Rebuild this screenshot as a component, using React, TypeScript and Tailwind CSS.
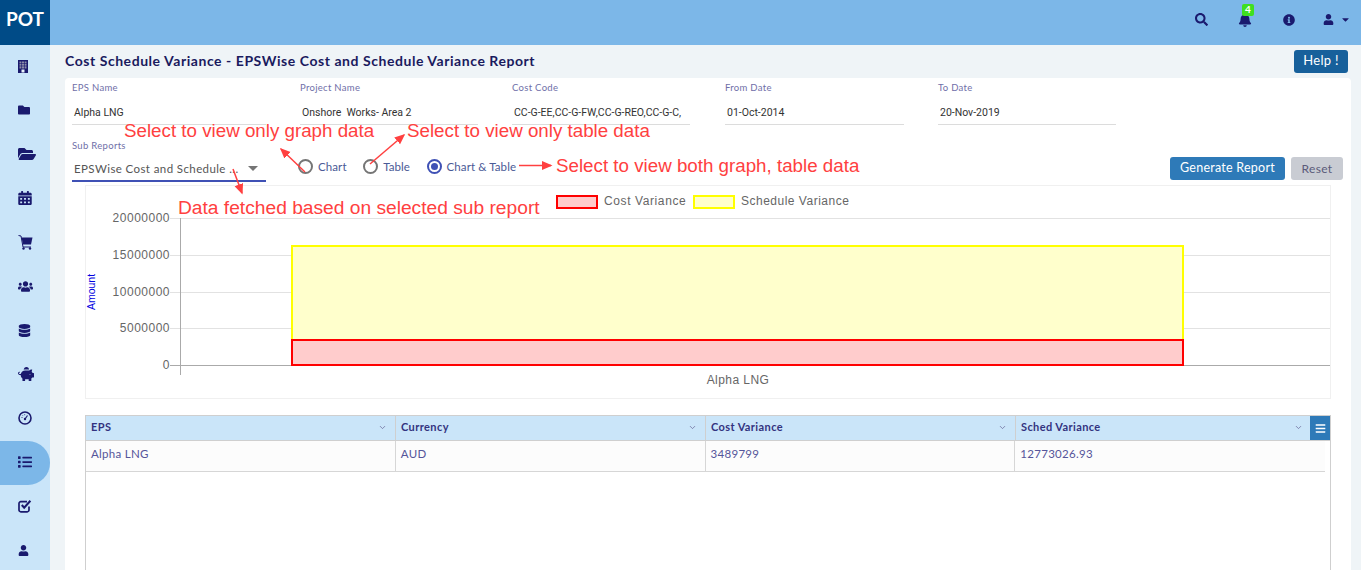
import { useState } from "react";
import {
  FaFolder,
  FaFolderOpen,
  FaCalendarAlt,
  FaUsers,
  FaDatabase,
  FaPiggyBank,
  FaList,
  FaUser,
  FaSearch,
  FaBell,
  FaInfoCircle,
  FaCaretDown,
  FaBars,
} from "react-icons/fa";
import { FiChevronDown } from "react-icons/fi";

function BuildingIcon() {
  return (
    <svg width="10" height="13" viewBox="0 0 10 13">
      <rect width="10" height="13" fill="#1a1a6e" />
      <path d="M1.5 1.5h7v7h-7z" fill="#8b8ba8" />
      <path d="M3.5 1v8M6.5 1v8M1 3.5h8M1 6h8" stroke="#1a1a6e" strokeWidth="0.6" />
      <rect x="3.5" y="9.5" width="3" height="3" fill="#e8f2fb" />
    </svg>
  );
}

function CartIcon() {
  return (
    <svg width="15" height="15" viewBox="0 0 15 15">
      <path d="M0.5 0.5 L3 1 L5 12 H13" fill="none" stroke="#1a1a6e" strokeWidth="1" />
      <path d="M3.5 2.5 H14.5 L13 9.5 H5 Z" fill="#1a1a6e" />
      <circle cx="5.5" cy="13.5" r="1.2" fill="#1a1a6e" />
      <circle cx="12" cy="13.5" r="1.2" fill="#1a1a6e" />
    </svg>
  );
}

function GaugeIcon() {
  return (
    <svg width="14" height="14" viewBox="0 0 14 14">
      <circle cx="7" cy="7" r="6" fill="none" stroke="#1a1a6e" strokeWidth="1.6" />
      <path d="M7 8 L9.5 4.5" stroke="#1a1a6e" strokeWidth="1.2" />
      <circle cx="7" cy="8" r="1.2" fill="#1a1a6e" />
      <path d="M3.5 6.5h1M6.7 3.2v1M4.4 4.2l.6.6" stroke="#1a1a6e" strokeWidth="0.8" />
    </svg>
  );
}

function CheckIcon() {
  return (
    <svg width="14" height="14" viewBox="0 0 14 14">
      <path
        d="M11 7.5 V11 A1.8 1.8 0 0 1 9.2 12.8 H2.8 A1.8 1.8 0 0 1 1 11 V4.5 A1.8 1.8 0 0 1 2.8 2.7 H9"
        fill="none"
        stroke="#1a1a6e"
        strokeWidth="1.7"
      />
      <path d="M3.8 6 L6.2 8.6 L12.4 1.8" fill="none" stroke="#1a1a6e" strokeWidth="2.1" />
    </svg>
  );
}

const navItems = [
  { icon: <BuildingIcon /> },
  { icon: <FaFolder size={12} /> },
  { icon: <FaFolderOpen size={18} /> },
  { icon: <FaCalendarAlt size={14} className="scale-x-110" /> },
  { icon: <CartIcon /> },
  { icon: <FaUsers size={15} /> },
  { icon: <FaDatabase size={13} /> },
  { icon: <FaPiggyBank size={16} /> },
  { icon: <GaugeIcon /> },
  { icon: <FaList size={14} />, active: true },
  { icon: <CheckIcon /> },
  { icon: <FaUser size={11} /> },
];

const filters = [
  { label: "EPS Name", value: "Alpha LNG", width: "w-[194px]", mr: "mr-[34px]" },
  { label: "Project Name", value: "Onshore  Works- Area 2", width: "w-[178px]", mr: "mr-[34px]" },
  { label: "Cost Code", value: "CC-G-EE,CC-G-FW,CC-G-REO,CC-G-C,", width: "w-[178px]", mr: "mr-[35px]" },
  { label: "From Date", value: "01-Oct-2014", width: "w-[179px]", mr: "mr-[34px]" },
  { label: "To Date", value: "20-Nov-2019", width: "w-[178px]", mr: "" },
];

const columns = ["EPS", "Currency", "Cost Variance", "Sched Variance"];
const row = ["Alpha LNG", "AUD", "3489799", "12773026.93"];

function Radio({ label, checked, onSelect }: { label: string; checked: boolean; onSelect: () => void }) {
  return (
    <button onClick={onSelect} className="flex items-center gap-[5px] text-[11.5px] tracking-[0.1px] text-[#4a5a96]">
      <span
        className={
          "flex h-[15px] w-[15px] items-center justify-center rounded-full border-2 " +
          (checked ? "border-[#3f51b5]" : "border-[#757575]")
        }
      >
        {checked && <span className="h-[7px] w-[7px] rounded-full bg-[#3f51b5]" />}
      </span>
      {label}
    </button>
  );
}

function Chart() {
  const ticks = [
    { y: 33, label: "20000000" },
    { y: 70, label: "15000000" },
    { y: 107, label: "10000000" },
    { y: 143, label: "5000000" },
    { y: 180, label: "0" },
  ];
  return (
    <svg width="1244" height="212" className="block">
      {ticks.map((t) => (
        <g key={t.label}>
          <line x1="84" x2="1244" y1={t.y - 1 + 0.5} y2={t.y - 1 + 0.5} stroke={t.y === 180 ? "#aaa" : "#e2e2e2"} />
          <text x="84" y={t.y + 3} textAnchor="end" fontSize="12" letterSpacing="0.5" fill="#666" fontFamily="Liberation Sans, sans-serif">
            {t.label}
          </text>
        </g>
      ))}
      <line x1="94.5" x2="94.5" y1="32" y2="189" stroke="#aaa" />
      <rect x="206" y="60" width="891" height="119" fill="#ffffcc" stroke="#ffff00" strokeWidth="2" />
      <rect x="206" y="154" width="891" height="25" fill="#ffcccc" stroke="#ff0000" strokeWidth="2" />
      <text x="652" y="198" textAnchor="middle" fontSize="12" letterSpacing="0.45" fill="#666" fontFamily="Liberation Sans, sans-serif">
        Alpha LNG
      </text>
      <text transform="translate(9 106) rotate(-90)" textAnchor="middle" fontSize="10.5" fill="#0000e0" fontFamily="Liberation Sans, sans-serif">
        Amount
      </text>
      <rect x="471" y="10" width="40" height="12" fill="#ffcccc" stroke="#ff0000" strokeWidth="2" />
      <text x="518" y="18.5" fontSize="12" letterSpacing="0.6" fill="#666" fontFamily="Liberation Sans, sans-serif">
        Cost Variance
      </text>
      <rect x="608" y="10" width="40" height="12" fill="#ffffcc" stroke="#ffff00" strokeWidth="2" />
      <text x="655" y="18.5" fontSize="12" letterSpacing="0.5" fill="#666" fontFamily="Liberation Sans, sans-serif">
        Schedule Variance
      </text>
    </svg>
  );
}

function Annotations() {
  const red = "#ff4040";
  return (
    <div className="pointer-events-none absolute inset-0 font-['Liberation_Sans',sans-serif] text-[18.75px] leading-[22px] text-[#ff4040]">
      <svg width="1361" height="570" className="absolute left-0 top-0">
        <defs>
          <marker id="head" markerWidth="8" markerHeight="8" refX="6" refY="3" orient="auto">
            <path d="M0 0 L7 3 L0 6 Z" fill={red} />
          </marker>
        </defs>
        <line x1="305" y1="172" x2="281" y2="149" stroke={red} strokeWidth="1.5" markerEnd="url(#head)" />
        <line x1="370" y1="164" x2="404" y2="135" stroke={red} strokeWidth="1.5" markerEnd="url(#head)" />
        <line x1="519" y1="165.5" x2="551" y2="165.5" stroke={red} strokeWidth="1.5" markerEnd="url(#head)" />
        <line x1="233" y1="169" x2="242" y2="193" stroke={red} strokeWidth="1.5" markerEnd="url(#head)" />
      </svg>
      <span className="absolute left-[124px] top-[120px]">Select to view only graph data</span>
      <span className="absolute left-[407px] top-[120px]">Select to view only table data</span>
      <span className="absolute left-[556px] top-[155px]">Select to view both graph, table data</span>
      <span className="absolute left-[178px] top-[197px] text-[19.2px]">Data fetched based on selected sub report</span>
    </div>
  );
}

export default function App() {
  const [mode, setMode] = useState("both");

  return (
    <div className="relative flex h-[570px] w-[1361px] flex-col overflow-hidden bg-[#eff4f7] font-['Lato',sans-serif]">
      {/* Top bar */}
      <header className="flex h-[45px] shrink-0 items-center bg-[#7cb7e8] text-[#1a1a6e]">
        <div className="flex h-full w-[50px] items-center justify-center bg-[#004b87] pb-[6px] text-[19px] font-bold text-white">POT</div>
        <div className="ml-auto flex items-center pb-[6px]">
          <FaSearch size={13} className="mr-[30px]" />
          <div className="relative mr-[31px]">
            <FaBell size={14} />
            <span className="absolute left-[4px] top-[-9px] flex h-[12px] w-[12px] items-center justify-center rounded-[2px] bg-[#3fe01f] text-[10px] font-bold text-white">
              4
            </span>
          </div>
          <FaInfoCircle size={12} className="mr-[28px]" />
          <FaUser size={11} />
          <FaCaretDown size={11} className="ml-[6px] mr-[10px]" />
        </div>
      </header>

      <div className="flex min-h-0 flex-1">
        {/* Sidebar */}
        <nav className="flex w-[50px] shrink-0 flex-col bg-[#cae5f9] text-[#1a1a6e]">
          {navItems.map((item, i) => (
            <div
              key={i}
              className={
                "flex h-[44px] shrink-0 items-center pb-[2px] pl-[18px] " +
                (item.active ? "rounded-r-[22px] bg-[#7cb7e8]" : "")
              }
            >
              {item.icon}
            </div>
          ))}
        </nav>

        {/* Content */}
        <main className="min-w-0 flex-1 pl-[15px] pr-[10px]">
          <div className="flex h-[33px] items-center justify-between pr-[3px]">
            <h1 className="mt-[-2px] text-[14px] font-bold tracking-[0.55px] text-[#1a1a5e]">
              Cost Schedule Variance - EPSWise Cost and Schedule Variance Report
            </h1>
            <button className="mt-[-1px] h-[23px] w-[54px] rounded-[3px] bg-[#17609b] text-[13px] tracking-[0.3px] text-white">Help !</button>
          </div>

          <section className="h-[600px] rounded-[4px] bg-white pl-[7px] pr-[8px]">
            <div className="flex pt-[4px]">
              {filters.map((f) => (
                <div key={f.label} className={f.width + " " + f.mr}>
                  <div className="h-[12px] text-[9.5px] leading-[12px] tracking-[0.3px] text-[#6f6fa8]">{f.label}</div>
                  <div className="flex h-[31px] items-end whitespace-pre border-b border-[#dcdcdc] pb-[5px] pl-[2px] font-['Roboto',sans-serif] text-[10.5px] leading-[13px] text-[#333]">
                    {f.value}
                  </div>
                </div>
              ))}
            </div>

            <div className="mt-[15px] flex items-start">
              <div className="w-[194px]">
                <div className="h-[12px] text-[9.5px] leading-[12px] tracking-[0.3px] text-[#6f6fa8]">Sub Reports</div>
                <div className="flex h-[30px] items-center justify-between border-b-2 border-[#3f51b5] pl-[2px] pr-[8px] pt-[5px] text-[11.5px] tracking-[0.4px] text-[#555]">
                  <span>EPSWise Cost and Schedule ...</span>
                  <span className="h-0 w-0 border-x-[5px] border-t-[5px] border-x-transparent border-t-[#757575]" />
                </div>
              </div>
              <div className="ml-[32px] mt-[18px] flex items-center gap-[16.5px]">
                <Radio label="Chart" checked={mode === "chart"} onSelect={() => setMode("chart")} />
                <Radio label="Table" checked={mode === "table"} onSelect={() => setMode("table")} />
                <Radio label="Chart & Table" checked={mode === "both"} onSelect={() => setMode("both")} />
              </div>
              <div className="ml-auto mt-[17px] flex gap-[6px]">
                <button className="h-[23px] w-[115px] rounded-[3px] bg-[#2e7ab8] text-[12.5px] tracking-[0.25px] text-white">Generate Report</button>
                <button className="h-[23px] w-[52px] rounded-[3px] bg-[#c9ccd3] text-[12px] tracking-[0.3px] text-[#5b5b7a]">Reset</button>
              </div>
            </div>

            <div className="ml-[13px] mr-[12px] mt-[3px] border border-[#f0f0f0]">
              <Chart />
            </div>

            {/* Grid */}
            <div className="ml-[13px] mr-[12px] mt-[16px] h-[300px] border border-[#cfcfcf]">
              <div className="relative flex h-[25px] border-b border-[#cfcfcf] bg-[#cae5f9]">
                {columns.map((c, i) => (
                  <div
                    key={c}
                    className={
                      "flex w-[310px] items-center justify-between pb-[2px] pl-[5px] pr-[8px] text-[11px] font-bold tracking-[0.4px] text-[#33337f] " +
                      (i < 3 ? "border-r border-[#cfcfcf]" : "pr-[23px]")
                    }
                  >
                    {c}
                    <FiChevronDown size={9} className="text-[#6a6a9a]" />
                  </div>
                ))}
                <div className="absolute right-0 top-0 flex h-[24px] w-[20px] items-center justify-center bg-[#2e7ab8] text-white">
                  <FaBars size={11} />
                </div>
              </div>
              <div className="mr-[5px] flex h-[31px] border-b border-[#d6d6d6] bg-[#fcfcfc]">
                {row.map((v, i) => (
                  <div
                    key={i}
                    className={
                      "w-[310px] pl-[5px] pt-[5px] text-[11.5px] leading-[15px] tracking-[0.3px] text-[#55559a] " +
                      (i < 3 ? "border-r border-[#d6d6d6]" : "")
                    }
                  >
                    {v}
                  </div>
                ))}
              </div>
            </div>
          </section>
        </main>
      </div>

      <Annotations />
    </div>
  );
}
